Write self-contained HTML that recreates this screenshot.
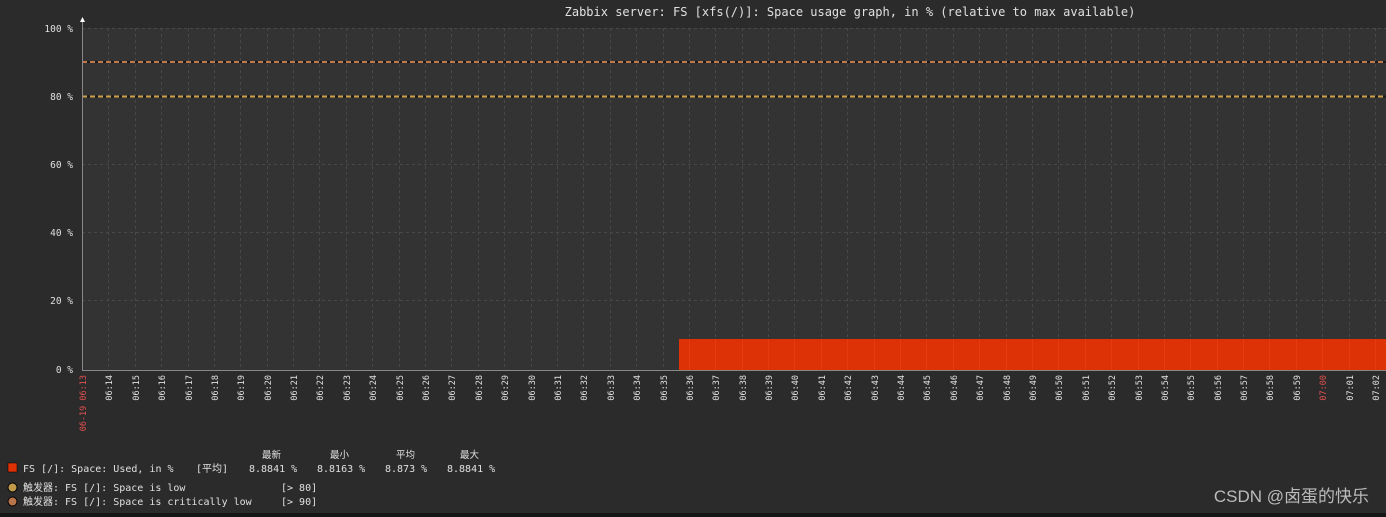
<!DOCTYPE html>
<html><head><meta charset="utf-8"><style>
html,body{margin:0;padding:0;background:#2b2b2b;width:1386px;height:517px;overflow:hidden}
svg{display:block}
text{font-family:"DejaVu Sans Mono","Liberation Mono","Noto Sans CJK SC",monospace;fill:#e0e0e0;white-space:pre}
</style></head><body>
<svg id="s" width="1386" height="517" xmlns="http://www.w3.org/2000/svg" xml:space="preserve">
<rect width="1386" height="517" fill="#2b2b2b"/>
<rect x="0" y="513" width="1386" height="4" fill="#161616"/>
<rect x="82" y="28" width="1304" height="342" fill="#333333"/>
<g id="grid"></g>
<rect x="679" y="339" width="707" height="31" fill="#dd3106"/>
<g id="bars"></g>
<line x1="82" y1="62" x2="1386" y2="62" stroke="#1a1a1a" stroke-width="2"/>
<line x1="82" y1="62" x2="1386" y2="62" stroke="#c07a4a" stroke-width="2" stroke-dasharray="5,3"/>
<line x1="82" y1="96.5" x2="1386" y2="96.5" stroke="#1a1a1a" stroke-width="2"/>
<line x1="82" y1="96.5" x2="1386" y2="96.5" stroke="#c9a04c" stroke-width="2" stroke-dasharray="5,3"/>
<line x1="82.5" y1="22" x2="82.5" y2="370" stroke="#888"/>
<line x1="82" y1="370.5" x2="1386" y2="370.5" stroke="#888"/>
<polygon points="80,22 85,22 82.5,17" fill="#fff"/>
<text x="850" y="16" font-size="12" text-anchor="middle">Zabbix server: FS [xfs(/)]: Space usage graph, in % (relative to max available)</text>
<g font-size="9.5" text-anchor="end">
<text x="73" y="32">100 %</text><text x="73" y="100">80 %</text><text x="73" y="168">60 %</text>
<text x="73" y="236">40 %</text><text x="73" y="304">20 %</text><text x="73" y="373">0 %</text>
</g>
<g id="labels" font-size="8.5"></g>
<g font-size="10">
<text x="262" y="458" font-size="9.5">最新</text><text x="330" y="458" font-size="9.5">最小</text>
<text x="396" y="458" font-size="9.5">平均</text><text x="460" y="458" font-size="9.5">最大</text>
<rect x="8" y="463" width="9" height="9" fill="#dd3106" stroke="#000" stroke-width="0.5"/>
<text x="23" y="472">FS [/]: Space: Used, in %</text>
<text x="196" y="472">[平均]</text>
<text x="249" y="472">8.8841 %</text>
<text x="317" y="472">8.8163 %</text>
<text x="385" y="472">8.873 %</text>
<text x="447" y="472">8.8841 %</text>
<circle cx="12.5" cy="487.5" r="4.5" fill="#c09a4a" stroke="#000"/>
<text x="23" y="491">触发器: FS [/]: Space is low</text>
<text x="281" y="491">[&gt; 80]</text>
<circle cx="12.5" cy="501.5" r="4.5" fill="#b8744a" stroke="#000"/>
<text x="23" y="505">触发器: FS [/]: Space is critically low</text>
<text x="281" y="505">[&gt; 90]</text>
</g>
<text x="1369" y="502" font-size="17" text-anchor="end" style="font-family:'Liberation Sans','Noto Sans CJK SC',sans-serif;fill:#bbb">CSDN @卤蛋的快乐</text>
</svg>
<script>
var ns="http://www.w3.org/2000/svg",g=document.getElementById('grid'),lb=document.getElementById('labels'),b=document.getElementById('bars');
function el(t,a,p){var e=document.createElementNS(ns,t);for(var k in a)e.setAttribute(k,a[k]);p.appendChild(e);return e;}
[28.5,164.5,232.5,300.5].forEach(function(y){el('line',{x1:82,y1:y,x2:1386,y2:y,stroke:'#484848','stroke-dasharray':'3,3'},g);});
var step=1293/49;
for(var m=0;m<=49;m++){var x=Math.round(82+m*step)+0.5;
 if(m>0)el('line',{x1:x,y1:28,x2:x,y2:370,stroke:'#484848','stroke-dasharray':'3,3'},g);
 if(x>679&&m>0)el('line',{x1:x,y1:339,x2:x,y2:370,stroke:'#e63a10','stroke-width':1},b);
 var tot=13+m,hh=6+Math.floor(tot/60),mm=tot%60;
 var s=(hh<10?'0':'')+hh+':'+(mm<10?'0':'')+mm;
 var red=false;
 if(m==0){s='06-19 06:13';red=true;} if(hh==7&&mm==0)red=true;
 var t=el('text',{x:0,y:0,'text-anchor':'end',transform:'translate('+(x+3.5)+',375) rotate(-90)'},lb);
 if(red)t.setAttribute('style','fill:#e05050');
 t.textContent=s;}
</script>
</body></html>
